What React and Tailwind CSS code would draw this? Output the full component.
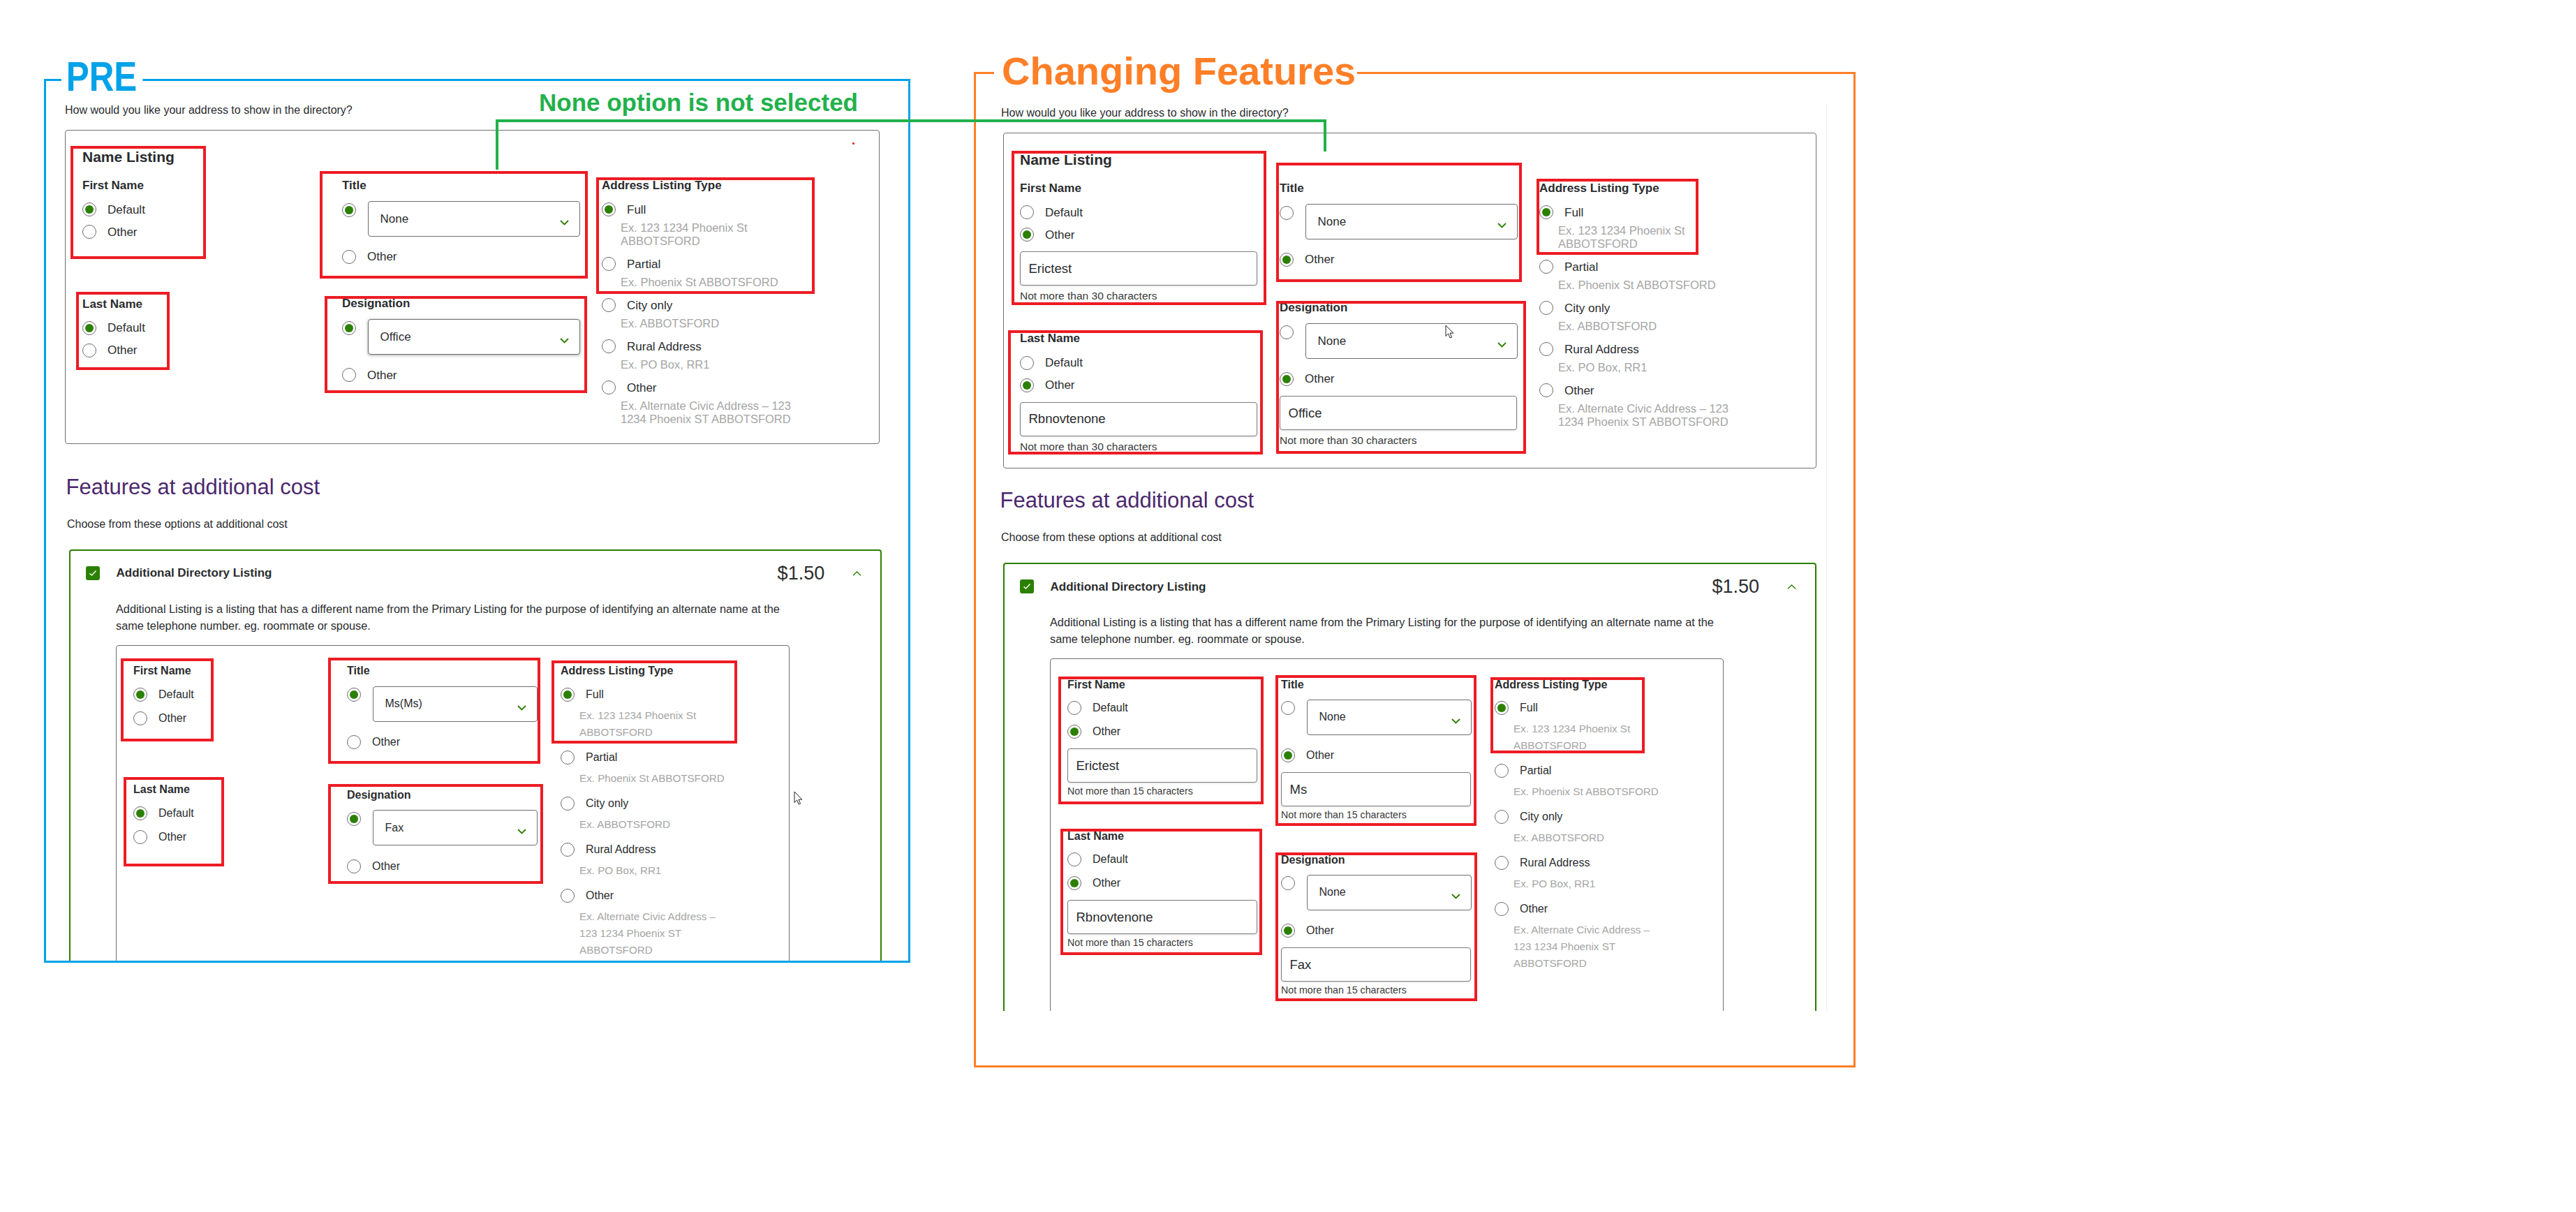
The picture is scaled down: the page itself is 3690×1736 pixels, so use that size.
import React from "react";

// size presets: LG = address box at top, SM = listing inside the green card
const LG = {
  label: "text-[17px] leading-[20px]",
  opt: "text-[17px]",
  firstRow: "mt-[14.5px]",
  row: "mt-[12px]",
  col: "w-[340px]",
  select: "w-[304px] text-[17px]",
  input: "mt-[14px]",
  hint: "mt-[6px] text-[15.5px] leading-[18px]",
  selRow: "mt-[12px]",
  radioMt: "mt-[3px]",
  afterSel: "mt-[19px]",
  desc: "mt-[6.5px] text-[16.5px] leading-[19px]",
  block: "mt-[13.5px]",
};

const SM = {
  label: "text-[16px] leading-[19px]",
  opt: "text-[16px]",
  firstRow: "mt-[14.5px]",
  row: "mt-[14px]",
  col: "w-[272px]",
  select: "w-[236px] text-[16px]",
  input: "mt-[14px]",
  hint: "mt-[3.7px] text-[14.2px] leading-[17px]",
  selRow: "mt-[12.2px]",
  radioMt: "mt-[2.6px]",
  afterSel: "mt-[19.2px]",
  desc: "mt-[8px] text-[15.2px] leading-[24px]",
  block: "mt-[14px]",
};

const ADDR_LG = [
  ["Full", ["Ex. 123 1234 Phoenix St", "ABBOTSFORD"]],
  ["Partial", ["Ex. Phoenix St ABBOTSFORD"]],
  ["City only", ["Ex. ABBOTSFORD"]],
  ["Rural Address", ["Ex. PO Box, RR1"]],
  ["Other", ["Ex. Alternate Civic Address – 123", "1234 Phoenix ST ABBOTSFORD"]],
];

const ADDR_SM = [
  ["Full", ["Ex. 123 1234 Phoenix St", "ABBOTSFORD"]],
  ["Partial", ["Ex. Phoenix St ABBOTSFORD"]],
  ["City only", ["Ex. ABBOTSFORD"]],
  ["Rural Address", ["Ex. PO Box, RR1"]],
  ["Other", ["Ex. Alternate Civic Address –", "123 1234 Phoenix ST", "ABBOTSFORD"]],
];

// red annotation rectangle drawn over a field group
const RedBox = ({ className }) => (
  <div className={`pointer-events-none absolute border-[4px] border-[#ed1c24] ${className}`} />
);

const Radio = ({ checked, className = "" }) => (
  <span
    className={`flex h-[20px] w-[20px] shrink-0 items-center justify-center rounded-full border-[1.5px] border-[#6b6b6b] bg-white ${className}`}
  >
    {checked && <span className="h-[12px] w-[12px] rounded-full bg-[#2b8000]" />}
  </span>
);

const RadioRow = ({ s, checked, label, className = "" }) => (
  <div className={`flex h-[20px] items-center gap-[16px] whitespace-nowrap ${s.opt} ${className}`}>
    <Radio checked={checked} />
    <span>{label}</span>
  </div>
);

const Select = ({ s, value, shadow }) => (
  <div
    className={`flex h-[51px] shrink-0 items-center rounded-[4px] border border-[#6e6e6e] bg-white pl-[17px] pr-[15px] ${s.select} ${
      shadow ? "shadow-[0_1px_4px_rgba(0,0,0,0.35)]" : ""
    }`}
  >
    <span>{value}</span>
    <svg className="ml-auto mt-[11px]" width="13" height="8" viewBox="0 0 13 8" fill="none">
      <polyline points="1,1 6.5,6.5 12,1" stroke="#2b8000" strokeWidth="1.8" />
    </svg>
  </div>
);

const TextInput = ({ s, value }) => (
  <div
    className={`flex h-[49px] w-full items-center rounded-[4px] border border-[#7d7d7d] bg-white pl-[11.5px] text-[18.5px] shadow-[0_1px_3px_rgba(0,0,0,0.12)] ${s.input}`}
  >
    {value}
  </div>
);

const NameGroup = ({ s, label, other, value, hint, box, className = "" }) => (
  <div className={`relative ${className}`}>
    <div className={`font-bold ${s.label}`}>{label}</div>
    <RadioRow s={s} checked={!other} label="Default" className={s.firstRow} />
    <RadioRow s={s} checked={!!other} label="Other" className={s.row} />
    {other && (
      <>
        <TextInput s={s} value={value} />
        <div className={`text-[#3a3a3a] ${s.hint}`}>{hint}</div>
      </>
    )}
    <RedBox className={box} />
  </div>
);

const SelectGroup = ({ s, label, value, selected, otherValue, hint, shadow, box, className = "" }) => (
  <div className={`relative ${className}`}>
    <div className={`font-bold ${s.label}`}>{label}</div>
    <div className={`flex items-start gap-[16.5px] ${s.selRow}`}>
      <Radio checked={selected} className={s.radioMt} />
      <Select s={s} value={value} shadow={shadow} />
    </div>
    <RadioRow s={s} checked={!selected} label="Other" className={s.afterSel} />
    {otherValue && (
      <>
        <TextInput s={s} value={otherValue} />
        <div className={`text-[#3a3a3a] ${s.hint}`}>{hint}</div>
      </>
    )}
    <RedBox className={box} />
  </div>
);

const AddressGroup = ({ s, options, box }) => (
  <div className="relative">
    <div className={`whitespace-nowrap font-bold ${s.label}`}>Address Listing Type</div>
    {options.map(([label, lines], i) => (
      <div key={label} className={i === 0 ? s.firstRow : s.block}>
        <RadioRow s={s} checked={i === 0} label={label} />
        <div className={`whitespace-nowrap pl-[27px] text-[#a5a5a5] ${s.desc}`}>
          {lines.map((l) => (
            <div key={l}>{l}</div>
          ))}
        </div>
      </div>
    ))}
    <RedBox className={box} />
  </div>
);

const Checkbox = () => (
  <span className="flex h-[20px] w-[20px] shrink-0 items-center justify-center rounded-[3px] bg-[#2b8000]">
    <svg width="12" height="10" viewBox="0 0 12 10" fill="none">
      <polyline points="1.5,5.2 4.5,8 10.5,1.5" stroke="white" strokeWidth="1.4" />
    </svg>
  </span>
);

const Cursor = ({ className }) => (
  <svg className={`pointer-events-none absolute ${className}`} width="14" height="21" viewBox="0 0 14 21">
    <path
      d="M1 1 L1 16.5 L4.6 13 L7.2 19 L9.6 18 L7 12.2 L11.8 12.2 Z"
      fill="white"
      stroke="#222"
      strokeWidth="1"
      strokeLinejoin="round"
    />
  </svg>
);

const Card = ({ className, children }) => (
  <div className={`rounded-[4px] border-2 border-[#2b8000] pt-[18px] ${className}`}>
    <div className="flex h-[28px] items-center pl-[22.5px] pr-[27px]">
      <Checkbox />
      <span className="ml-[23.5px] text-[17px] font-bold">Additional Directory Listing</span>
      <span className="ml-auto text-[27px] leading-[28px]">$1.50</span>
      <svg className="ml-[40px]" width="13" height="7" viewBox="0 0 13 7" fill="none">
        <polyline points="1,6.3 6.5,1 12,6.3" stroke="#2b8000" strokeWidth="1.4" />
      </svg>
    </div>
    <p className="ml-[65.5px] mt-[25px] whitespace-nowrap text-[16.3px] leading-[24px]">
      Additional Listing is a listing that has a different name from the Primary Listing for the purpose of
      identifying an alternate name at the
      <br />
      same telephone number. eg. roommate or spouse.
    </p>
    <div className="ml-[65.5px] mt-[15.8px] w-[965px] rounded-[4px] border border-[#707070] pb-[60px] pl-[24px] pt-[26.5px]">
      <div className="flex items-start gap-[34px]">{children}</div>
    </div>
  </div>
);

const Question = () => (
  <p className="text-[16px] leading-[20px]">How would you like your address to show in the directory?</p>
);

const PrePanel = () => (
  <div className="h-full overflow-hidden pl-[27px] pt-[32px]">
    <Question />
    <div className="relative mt-[18px] w-[1167px] rounded-[4px] border border-[#707070] pb-[25.5px] pl-[24px] pt-[24.8px]">
      <div className="text-[21px] font-semibold leading-[26px]">Name Listing</div>
      <div className="mt-[18px] flex items-start gap-[32px]">
        <div className={`flex flex-col ${LG.col}`}>
          <NameGroup s={LG} label="First Name" box="left-[-16.6px] top-[-47.3px] h-[162.7px] w-[193.3px]" />
          <NameGroup
            s={LG}
            label="Last Name"
            className="mt-[83.3px]"
            box="left-[-9.3px] top-[-7.4px] h-[111.7px] w-[134.3px]"
          />
        </div>
        <div className={`flex flex-col ${LG.col}`}>
          <SelectGroup
            s={LG}
            label="Title"
            value="None"
            selected
            box="left-[-31.7px] top-[-10.6px] h-[153.3px] w-[384px]"
          />
          <SelectGroup
            s={LG}
            label="Designation"
            value="Office"
            selected
            shadow
            className="mt-[47.7px]"
            box="left-[-24.7px] top-[-1.4px] h-[139px] w-[375.7px]"
          />
        </div>
        <div className={LG.col}>
          <AddressGroup s={LG} options={ADDR_LG} box="left-[-7.6px] top-[-2.3px] h-[167px] w-[312.3px]" />
        </div>
      </div>
      <span className="absolute right-[35px] top-[17px] h-[3px] w-[3px] rounded-full bg-[#e60000]" />
    </div>

    <h2 className="ml-[1.5px] mt-[43.9px] text-[31px] leading-[36px] text-[#4b286d]">Features at additional cost</h2>
    <p className="ml-[3px] mt-[24.8px] text-[16px] leading-[20px]">Choose from these options at additional cost</p>
    <Card className="ml-[5.5px] mt-[26.1px] w-[1164.7px]">
      <div className={`flex flex-col ${SM.col}`}>
        <NameGroup s={SM} label="First Name" box="left-[-18.5px] top-[-8.8px] h-[119.5px] w-[133.5px]" />
        <NameGroup
          s={SM}
          label="Last Name"
          className="mt-[82.4px]"
          box="left-[-14.5px] top-[-8.3px] h-[128.4px] w-[144px]"
        />
      </div>
      <div className={`flex flex-col ${SM.col}`}>
        <SelectGroup
          s={SM}
          label="Title"
          value="Ms(Ms)"
          selected
          box="left-[-26.6px] top-[-9.3px] h-[152px] w-[303.6px]"
        />
        <SelectGroup
          s={SM}
          label="Designation"
          value="Fax"
          selected
          className="mt-[56.5px]"
          box="left-[-26.6px] top-[-5.9px] h-[142.5px] w-[307.6px]"
        />
      </div>
      <div className={SM.col}>
        <AddressGroup s={SM} options={ADDR_SM} box="left-[-12.9px] top-[-5px] h-[119px] w-[265.5px]" />
      </div>
    </Card>
  </div>
);

const ChangedPanel = () => (
  <div className="mt-[42px] h-[1300px] w-[1219px] overflow-hidden border-r border-[#ececec] pl-[36px] pt-[4px]">
    <Question />
    <div className="relative ml-[2.5px] mt-[18px] w-[1165.5px] rounded-[4px] border border-[#707070] pb-[21px] pl-[23.5px] pt-[24.8px]">
      <div className="text-[21px] font-semibold leading-[26px]">Name Listing</div>
      <div className="mt-[18px] flex items-start gap-[32px]">
        <div className={`flex flex-col ${LG.col}`}>
          <NameGroup
            s={LG}
            label="First Name"
            other
            value="Erictest"
            hint="Not more than 30 characters"
            box="left-[-11.7px] top-[-44px] h-[221.6px] w-[365px]"
          />
          <NameGroup
            s={LG}
            label="Last Name"
            other
            value="Rbnovtenone"
            hint="Not more than 30 characters"
            className="mt-[42px]"
            box="left-[-17.4px] top-[-2.3px] h-[178.4px] w-[365px]"
          />
        </div>
        <div className={`flex flex-col ${LG.col}`}>
          <SelectGroup s={LG} label="Title" value="None" box="left-[-5.4px] top-[-26.4px] h-[170.7px] w-[352.7px]" />
          <SelectGroup
            s={LG}
            label="Designation"
            value="None"
            otherValue="Office"
            hint="Not more than 30 characters"
            className="mt-[49.3px]"
            box="left-[-5.4px] top-[0.4px] h-[218.3px] w-[358.4px]"
          />
        </div>
        <div className={LG.col}>
          <AddressGroup s={LG} options={ADDR_LG} box="left-[-4.1px] top-[-3.9px] h-[109.2px] w-[232.4px]" />
        </div>
      </div>
    </div>

    <h2 className="ml-[-1.5px] mt-[28.6px] text-[31px] leading-[36px] text-[#4b286d]">Features at additional cost</h2>
    <p className="mt-[25px] text-[16px] leading-[20px]">Choose from these options at additional cost</p>
    <Card className="ml-[2.5px] mt-[26px] w-[1165.5px]">
      <div className={`flex flex-col ${SM.col}`}>
        <NameGroup
          s={SM}
          label="First Name"
          other
          value="Erictest"
          hint="Not more than 15 characters"
          box="left-[-13.1px] top-[-1.8px] h-[183.3px] w-[294px]"
        />
        <NameGroup
          s={SM}
          label="Last Name"
          other
          value="Rbnovtenone"
          hint="Not more than 15 characters"
          className="mt-[45.9px]"
          box="left-[-10.2px] top-[-0.9px] h-[181.5px] w-[289.6px]"
        />
      </div>
      <div className={`flex flex-col ${SM.col}`}>
        <SelectGroup
          s={SM}
          label="Title"
          value="None"
          otherValue="Ms"
          hint="Not more than 15 characters"
          box="left-[-8.2px] top-[-3.6px] h-[216px] w-[287.8px]"
        />
        <SelectGroup
          s={SM}
          label="Designation"
          value="None"
          otherValue="Fax"
          hint="Not more than 15 characters"
          className="mt-[45.8px]"
          box="left-[-8.2px] top-[-0.4px] h-[213px] w-[289px]"
        />
      </div>
      <div className={SM.col}>
        <AddressGroup s={SM} options={ADDR_SM} box="left-[-5.7px] top-[-0.5px] h-[109px] w-[220.3px]" />
      </div>
    </Card>
  </div>
);

export default function App() {
  return (
    <div className="relative h-[1736px] w-[3690px] overflow-hidden bg-white font-['Liberation_Sans',Arial,sans-serif] text-[#2a2c2e]">
      <div className="flex items-start">
        {/* PRE frame */}
        <div className="relative ml-[63px] mt-[113px] h-[1265.5px] w-[1240.5px] shrink-0 border-[3px] border-[#00a2e8]">
          <span className="absolute left-[21.8px] top-[-36.2px] origin-left scale-x-[0.837] bg-white pl-[8px] pr-[10px] text-[59px] font-bold leading-[60px] text-[#00a2e8]">
            PRE
          </span>
          <PrePanel />
        </div>

        {/* Changing Features frame */}
        <div className="relative ml-[91.5px] mt-[103px] h-[1425.5px] w-[1263px] shrink-0 border-[3px] border-[#ff7f27]">
          <span className="absolute left-[26px] top-[-31.8px] whitespace-nowrap bg-white pl-[11px] pr-[2px] text-[56px] font-bold leading-[56px] text-[#ff7f27]">
            Changing Features
          </span>
          <ChangedPanel />
        </div>
      </div>

      {/* green annotation joining the two Title fields */}
      <span className="absolute left-[772px] top-[128.5px] whitespace-nowrap text-[35px] font-bold leading-[35px] text-[#22b14c]">
        None option is not selected
      </span>
      <div className="absolute left-[710px] top-[171px] h-[4px] w-[1190px] bg-[#22b14c]" />
      <div className="absolute left-[710px] top-[171px] h-[72px] w-[4px] bg-[#22b14c]" />
      <div className="absolute left-[1896px] top-[171px] h-[46px] w-[4px] bg-[#22b14c]" />

      <Cursor className="left-[1136.5px] top-[1132.7px]" />
      <Cursor className="left-[2070px] top-[465px]" />
    </div>
  );
}
